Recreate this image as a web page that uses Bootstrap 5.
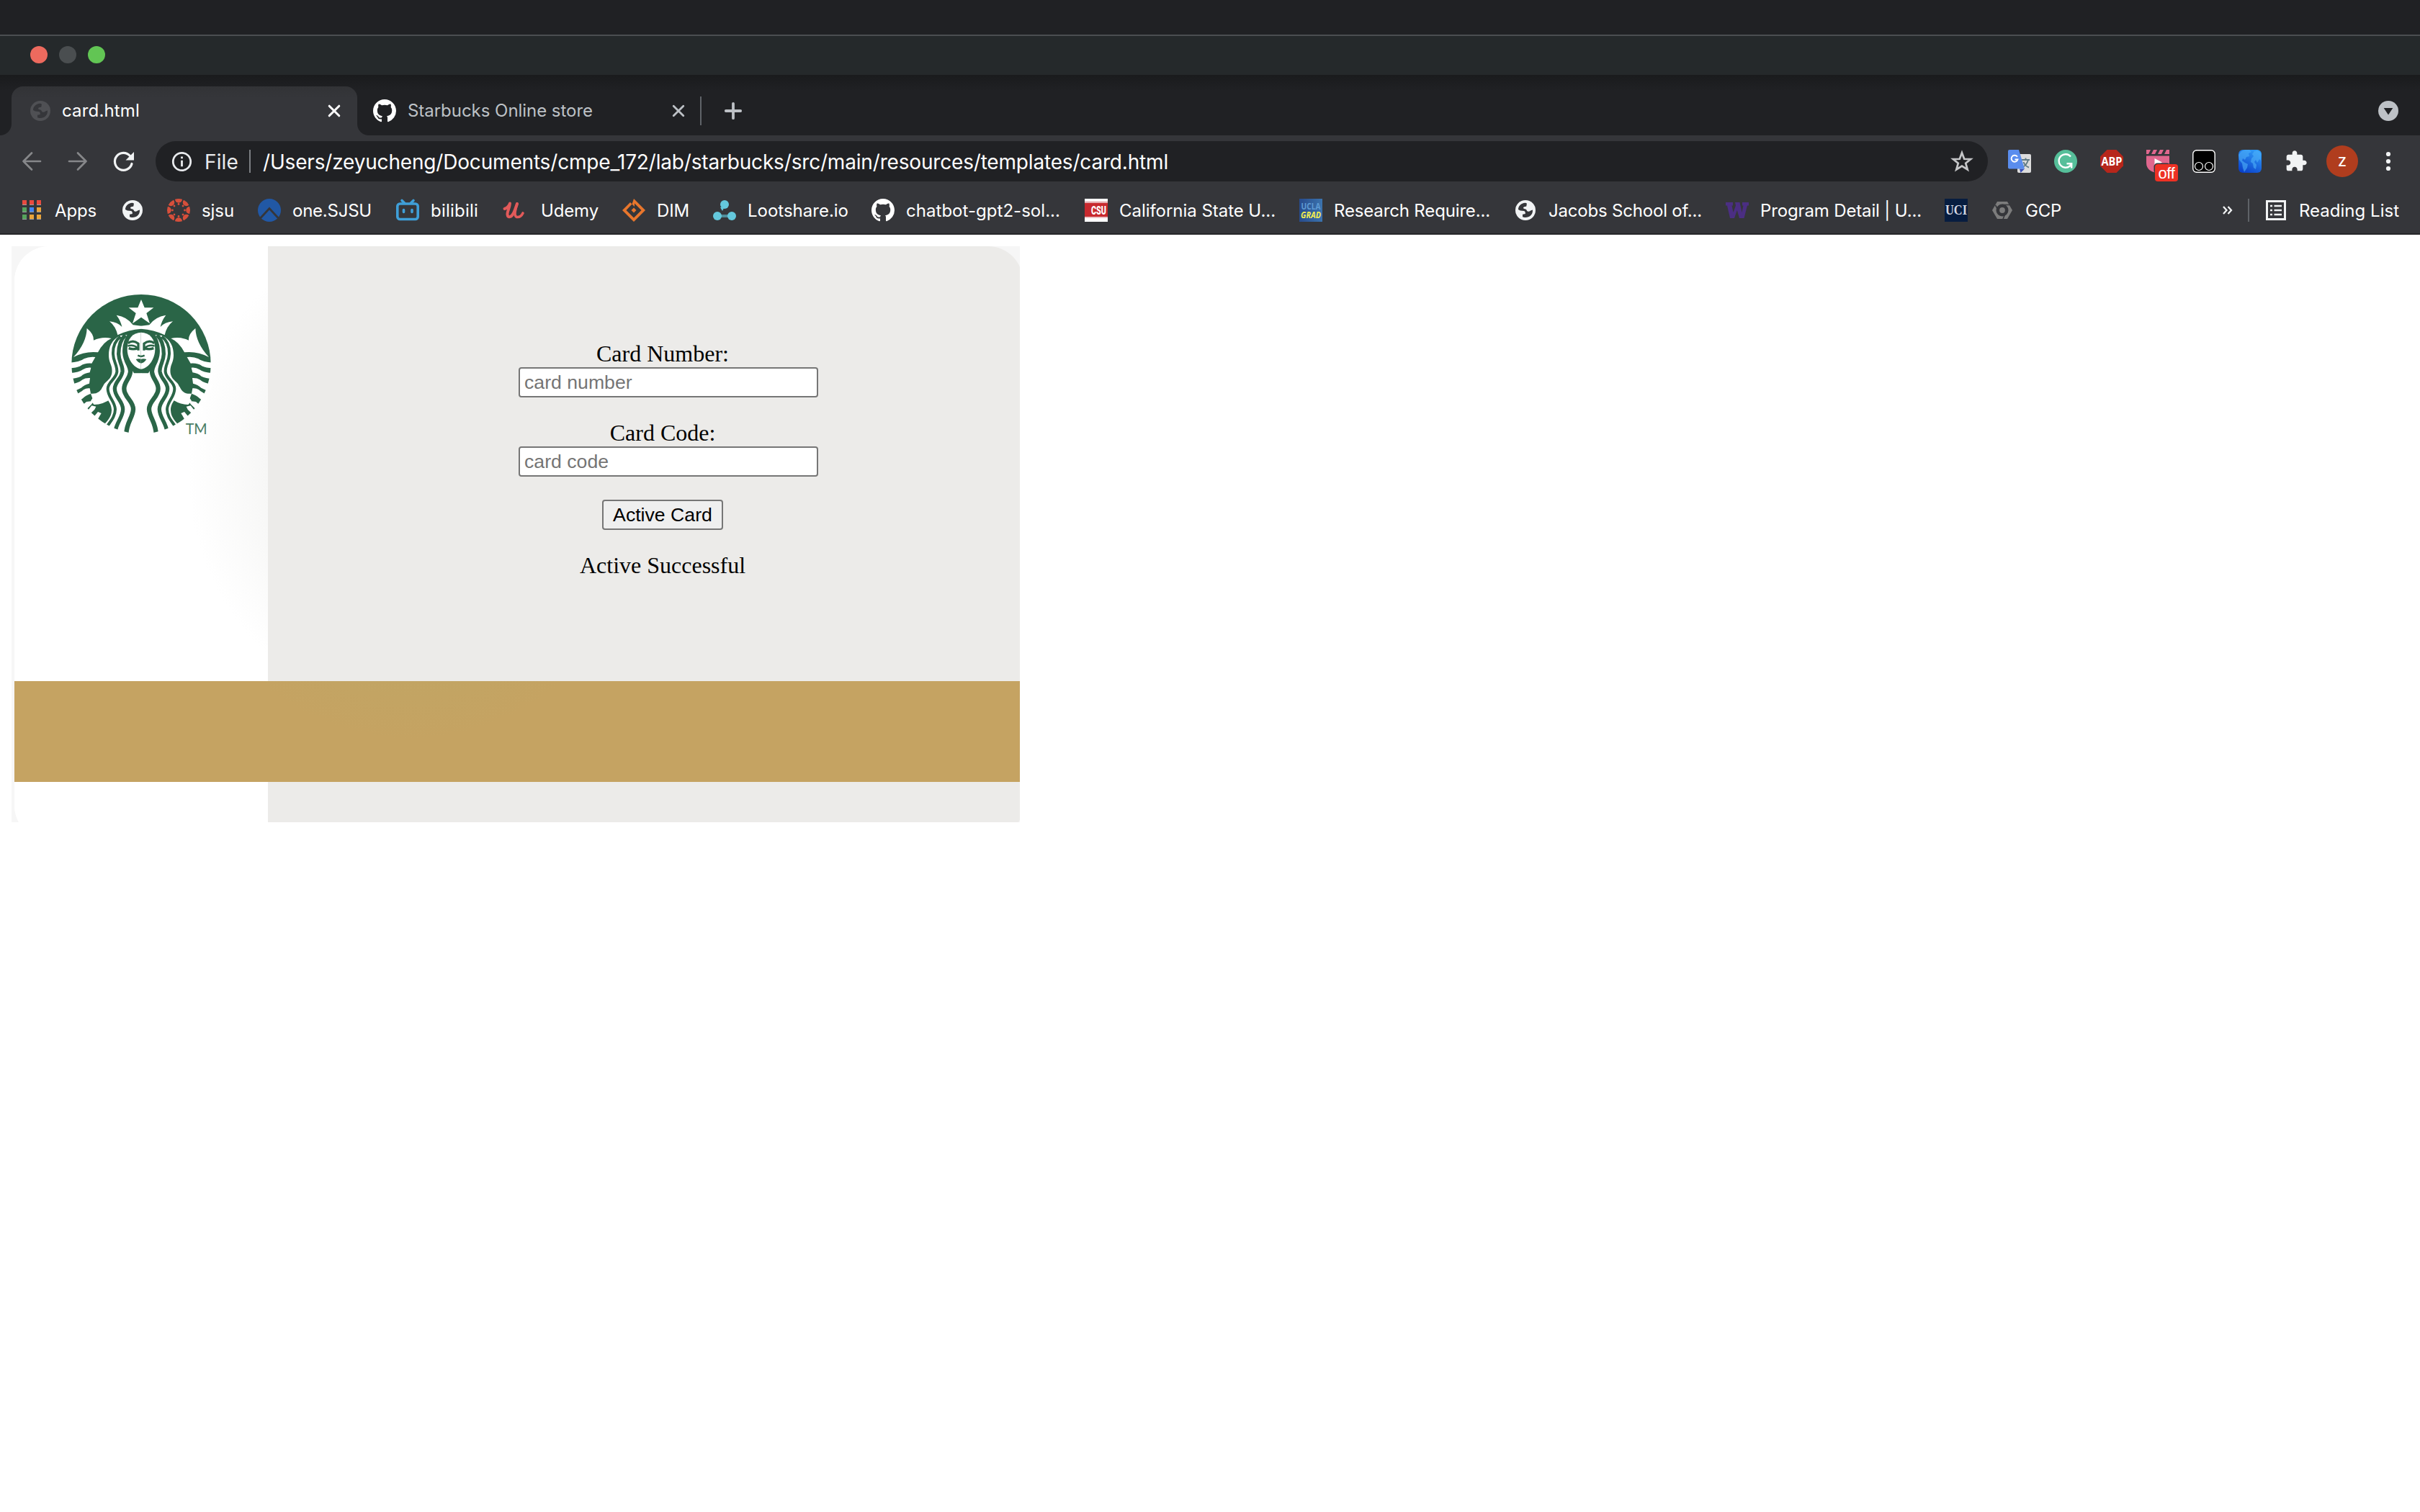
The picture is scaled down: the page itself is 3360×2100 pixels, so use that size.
<!DOCTYPE html>
<html lang="en">
<head>
<meta charset="utf-8">
<title>card.html</title>
<link href="https://cdn.jsdelivr.net/npm/bootstrap@5.3.0/dist/css/bootstrap.min.css" rel="stylesheet">
<style>
body{background:#fff;width:3360px;height:2100px;overflow:hidden;font-family:Inter,Roboto,sans-serif;color:#fff}
svg{display:block;flex:none;overflow:visible}
.menubar{height:50px;background:#202124;border-bottom:2px solid #4b4e51}
.titlebar{height:54px;background:#25292b;padding:0 0 2px 42px;gap:16px}
.light{width:24px;height:24px}
.tabstrip{height:84px;padding:16px 30px 0 16px;background:linear-gradient(#1a1b1d,#202124 22px)}
.tab{height:68px;font-size:24px;position:relative}
.tab-on{width:480px;padding:0 24px 0 26px;border-radius:16px 16px 0 0;background:linear-gradient(#323336,#35363a 16px)}
.tab-on::before,.tab-on::after{content:"";position:absolute;bottom:0;width:16px;height:16px}
.tab-on::before{left:-16px;background:radial-gradient(circle at 0 0,#202124 15.5px,#35363a 16.5px)}
.tab-on::after{right:-16px;background:radial-gradient(circle at 100% 0,#202124 15.5px,#35363a 16.5px)}
.tab-off{width:478px;padding:0 24px 0 22px;color:#bdc1c6}
.vline{width:2px;background:#5f6368}
.toolbar{height:72px;background:#35363a;padding:0 40px 0 28px}
.omnibox{width:2544px;height:56px;background:#202124;padding:0 20px 0 22px;font-size:28px;margin-left:28px}
.lbl{white-space:pre;display:inline-block;line-height:1}
.omnibox .lbl,.bookbar .lbl{padding-top:2px}
.bookbar{height:66px;background:#35363a;border-bottom:2px solid #262729;font-size:24px;padding:0 29px 0 28px}
.bm{flex:none;gap:16px}
.page{padding:16px}
.giftcard{width:1400px;height:800px;background:#f6f6f6;position:relative;overflow:hidden}
.face-side{width:1400px;height:825px;margin-left:4px;border-radius:48px;overflow:hidden;background:#ecebe9}
.brand{width:352px;height:825px;background:radial-gradient(ellipse 310px 335px at 550px 310px,#f0f0ef 40%,#f7f7f6 64%,#fff 100%),#fff;padding:48px 0 0 60px}
.band{position:absolute;left:4px;top:603.5px;width:1396px;height:140.5px;background:radial-gradient(ellipse 340px 370px at 550px -290px,#c1a564 70%,#c5a362 100%)}
.cardform{width:400px;margin-left:348px;padding-top:130px;font-family:"Liberation Serif",serif;font-size:32px;color:#000}
.cardform label,.cardform p{line-height:38px;height:38px;margin:0}
.cardform input,.cardform button{font:26.67px/30px "Liberation Sans",Arial,sans-serif;height:42px;border:2px solid #767676;border-radius:4px;display:block;flex:none}
.cardform input{width:416px;padding:0 6px;background:#fff;margin-bottom:30px}
.cardform input::placeholder{color:#757575;opacity:1}
.cardform button{width:168px;background:#efefef;color:#000;padding:0;margin:2px 0 30px}
.offtag{position:absolute;left:12px;top:20px;width:32px;height:24px;background:#ee3124;border-radius:4px;font:22px/26px "Liberation Sans",sans-serif;text-align:center;letter-spacing:-.3px}
</style>
<script src="https://cdn.jsdelivr.net/npm/bootstrap@5.3.0/dist/js/bootstrap.bundle.min.js"></script>
</head>
<body>
<svg width="0" height="0" class="position-absolute">
  <defs>
    <symbol id="globe" viewBox="0 0 28 28"><circle cx="14" cy="14" r="14" fill="currentColor"/><path fill="#35363a" d="M4 13C4 8 8 4 13.500 3.700 16 4 16.500 5 15.500 6.500L15.500 8C15 9.500 11.500 8.500 11 10.500 11 12 13 12 14 12.500 16 13 15.500 15 17 15.500 19 16 20.500 15.500 21 14.500L24 13.500C24.500 20 19.500 24 14 24 12.500 24 11 23.700 10 23.200L10 20C10.500 19 13.500 20 13.800 18.500 14 17 13.500 15.500 12 15L7 14.500Z"/></symbol>
    <symbol id="octo" viewBox="0 0 16 16"><path fill="#fff" d="M8 0C3.580 0 0 3.580 0 8c0 3.540 2.290 6.530 5.470 7.590.4.070.55-.17.55-.38 0-.19-.01-.82-.01-1.490-2.010.37-2.530-.49-2.690-.94-.09-.23-.48-.94-.82-1.130-.28-.15-.68-.52-.01-.53.63-.01 1.080.58 1.230.82.72 1.210 1.870.87 2.330.66.07-.52.28-.87.51-1.070-1.780-.2-3.640-.89-3.640-3.950 0-.87.31-1.590.82-2.150-.08-.2-.36-1.020.08-2.120 0 0 .67-.21 2.200.82.64-.18 1.320-.27 2-.27s1.360.09 2 .27c1.530-1.040 2.200-.82 2.200-.82.44 1.100.16 1.920.08 2.120.51.56.82 1.270.82 2.150 0 3.070-1.870 3.750-3.650 3.950.29.25.54.73.54 1.480 0 1.070-.01 1.930-.01 2.200 0 .21.15.46.55.38A8.010 8.010 0 0 0 16 8c0-4.420-3.580-8-8-8z"/></symbol>
  </defs>
</svg>

<header>
  <div class="menubar"></div>
  <div class="titlebar d-flex align-items-center">
    <span class="light rounded-circle" style="background:#ed6a5e"></span>
    <span class="light rounded-circle" style="background:#4a4e50"></span>
    <span class="light rounded-circle" style="background:#62c554"></span>
  </div>

  <nav class="tabstrip d-flex">
    <div class="tab tab-on d-flex align-items-center">
      <svg width="28" height="28" style="color:#4f5054"><use href="#globe"/></svg>
      <span class="lbl ms-3" data-w="108">card.html</span>
      <svg class="ms-auto" width="16" height="16" viewBox="0 0 16 16"><path d="M1.200 1.200 14.800 14.800M14.800 1.200 1.200 14.800" stroke="#fff" stroke-width="3" stroke-linecap="round"/></svg>
    </div>
    <div class="tab tab-off d-flex align-items-center">
      <svg width="32" height="32"><use href="#octo"/></svg>
      <span class="lbl ms-3" data-w="257">Starbucks Online store</span>
      <svg class="ms-auto" width="16" height="16" viewBox="0 0 16 16"><path d="M1.200 1.200 14.800 14.800M14.800 1.200 1.200 14.800" stroke="#bdc1c6" stroke-width="2.800" stroke-linecap="round"/></svg>
    </div>
    <div class="d-flex align-items-center tab">
      <span class="vline" style="height:40px;margin-left:-2px"></span>
      <svg width="24" height="24" viewBox="0 0 24 24" style="margin-left:32px"><path d="M12 1.800V22.200M1.800 12H22.200" stroke="#bdc1c6" stroke-width="3.800" stroke-linecap="round"/></svg>
    </div>
    <div class="d-flex align-items-center tab ms-auto">
      <svg width="28" height="28" viewBox="0 0 28 28"><circle cx="14" cy="14" r="14" fill="#bdc1c6"/><path d="M7.700 10H20.300L14 19.500Z" fill="#202124"/></svg>
    </div>
  </nav>

  <div class="toolbar d-flex align-items-center">
    <svg width="32" height="32" viewBox="0 0 32 32" fill="none" stroke="#86878a" stroke-width="2.700" stroke-linecap="round" stroke-linejoin="round"><path d="M28 16H4.500M16 4.500 4.500 16 16 27.500"/></svg>
    <svg class="ms-4" width="40" height="32" viewBox="-8 0 40 32" fill="none" stroke="#86878a" stroke-width="2.700" stroke-linecap="round" stroke-linejoin="round"><path d="M4 16H27.500M16 4.500 27.500 16 16 27.500"/></svg>
    <svg class="ms-4" width="40" height="32" viewBox="-8 0 40 32"><path d="M27 19.500A12 12 0 1 1 24.500 8.500" fill="none" stroke="#f1f3f4" stroke-width="3.200" stroke-linecap="round"/><path d="M30 3V14.500H18.500Z" fill="#f1f3f4"/></svg>
    <div class="omnibox rounded-pill d-flex align-items-center">
      <svg width="28" height="28" viewBox="0 0 28 28"><circle cx="14.500" cy="14.500" r="12.200" fill="none" stroke="#e8eaed" stroke-width="2.800"/><path d="M14.500 12.800V21.300M14.500 7.500V10.300" stroke="#e8eaed" stroke-width="2.800"/></svg>
      <span class="lbl" data-w="47" style="color:#e8eaed;margin-left:18px">File</span>
      <span class="vline" style="height:32px;margin-left:15px;background:#7c7f83"></span>
      <span class="lbl" data-w="1257" style="margin-left:17px">/Users/zeyucheng/Documents/cmpe_172/lab/starbucks/src/main/resources/templates/card.html</span>
      <svg class="ms-auto" width="32" height="32" viewBox="0 0 32 32"><path d="M16 4.200 19.200 12.800 28.200 13.100 21.200 18.700 23.700 27.500 16 22.500 8.300 27.500 10.800 18.700 3.800 13.100 12.800 12.800Z" fill="none" stroke="#c5c6c8" stroke-width="2.700"/></svg>
    </div>
    <div class="d-flex align-items-center" style="gap:32px;margin-left:28px">
      <svg width="32" height="32" viewBox="0 0 32 32"><rect x="13" y="6" width="19" height="26" rx="2" fill="#dcdcdc"/><path d="M16 26.500H23L17.500 32Z" fill="#3a4fb5"/><path d="M19 14H30M24.500 11.500V14M28 14C26.500 19 23 23 20 24M21.500 17C23 21 26 23.500 29 24.500" stroke="#607a84" stroke-width="1.900" fill="none"/><path d="M2 0H15L23 26.500H2A2 2 0 0 1 0 24.500V2A2 2 0 0 1 2 0Z" fill="#5a8dee"/><path d="M13 9.800A4.500 4.500 0 1 0 13.500 13.500H9.500" fill="none" stroke="#fff" stroke-width="1.900"/></svg>
      <svg width="32" height="32" viewBox="0 0 32 32"><circle cx="16" cy="16" r="16" fill="#56bf9a"/><path d="M23 9.500A9.300 9.300 0 1 0 22 22.500L24 19.500M17.500 19.200H24.200V25.500" fill="none" stroke="#fff" stroke-width="2.400"/></svg>
      <svg width="32" height="32" viewBox="0 0 32 32"><path d="M9.500 0H22.500L32 9.500V22.500L22.500 32H9.500L0 22.500V9.500Z" fill="#b7261b"/><text x="16" y="21.500" text-anchor="middle" textLength="29" lengthAdjust="spacingAndGlyphs" font-family="Open Sans,sans-serif" font-weight="700" font-size="15.500" fill="#fff">ABP</text></svg>
      <div class="position-relative">
        <svg width="32" height="32" viewBox="0 0 32 32"><path d="M0 0H6L3 6H0ZM10 0H15L12 6H7ZM19 0H24L21 6H16ZM28 0H32V6H25Z" fill="#e0678e"/><path d="M0 8.500H32V18C32 27 26 31 16 32 6 31 0 27 0 18Z" fill="#e0678e"/><path d="M11.500 12 22 17.500 11.500 24Z" fill="#fff"/><rect x="10.500" y="18.500" width="23" height="15" rx="5" fill="#35363a"/></svg>
        <span class="offtag">off</span>
      </div>
      <svg width="32" height="32" viewBox="0 0 32 32"><rect x=".8" y=".8" width="30.400" height="30.400" rx="5" fill="#000" stroke="#fff" stroke-width="1.400"/><g fill="none" stroke="#fff" stroke-width="1.200"><circle cx="9" cy="23" r="5.500"/><circle cx="23" cy="23" r="5.500"/></g></svg>
      <svg width="32" height="32" viewBox="0 0 32 32"><defs><linearGradient id="sea" x1=".7" y1="0" x2=".2" y2="1"><stop offset="0" stop-color="#2f9bf8"/><stop offset="1" stop-color="#0a3fc8"/></linearGradient></defs><rect width="32" height="32" rx="6" fill="url(#sea)"/><path d="M0 7 4 2 9 0H15L18 3 14 5 15 9 11 10 9 14 6 12 5 15 9 18 13 20 12 25 8 31 6 25 5 19 1 14ZM19 6 22 2 27 1 31 5V15L29 13 26 18 24 14 22 17 25 21 24 27 21 25 20 19 17 17 18 12 21 9Z" fill="#4fb0f8" opacity=".6"/></svg>
      <svg width="32" height="32" viewBox="0 0 24 24"><path fill="#f1f3f4" d="M20.500 11H19V7c0-1.100-.9-2-2-2h-4V3.500C13 2.120 11.880 1 10.500 1S8 2.120 8 3.500V5H4c-1.100 0-1.990.9-1.990 2v3.800H3.500c1.490 0 2.700 1.210 2.700 2.700s-1.210 2.700-2.700 2.700H2V20c0 1.100.9 2 2 2h3.800v-1.500c0-1.490 1.210-2.700 2.700-2.700 1.490 0 2.700 1.210 2.700 2.700V22H17c1.100 0 2-.9 2-2v-4h1.500c1.380 0 2.500-1.120 2.500-2.500S21.880 11 20.500 11z"/></svg>
    </div>
    <svg class="ms-auto" width="44" height="44" viewBox="0 0 44 44"><circle cx="22" cy="22" r="22" fill="#b03d1e"/><text x="22" y="28.500" text-anchor="middle" font-family="Roboto,sans-serif" font-size="18" font-weight="500" fill="#fff">Z</text></svg>
    <svg width="8" height="28" viewBox="0 0 8 28" style="margin-left:38px"><g fill="#f1f3f4"><circle cx="4" cy="4" r="3.100"/><circle cx="4" cy="14" r="3.100"/><circle cx="4" cy="24" r="3.100"/></g></svg>
  </div>

  <div class="bookbar d-flex align-items-center">
    <div class="bm d-flex align-items-center" style="width:140px">
      <svg width="32" height="32" viewBox="0 0 32 32"><g fill="#9b9c9e"><path d="M3 3h6v6H3zM13 3h6v6h-6zM23 3h6v6h-6zM3 13h6v6H3zM13 13h6v6h-6zM23 13h6v6h-6zM3 23h6v6H3zM13 23h6v6h-6zM23 23h6v6h-6z"/></g><path d="M3 2h6v6H3zM13 2h6v6h-6zM23 2h6v6h-6z" fill="#e94a3f"/><path d="M3 12h6v6H3zM3 22h6v6H3z" fill="#55a35c"/><path d="M13 12h6v6h-6z" fill="#4285f4"/><path d="M23 12h6v6h-6zM13 22h6v6h-6zM23 22h6v6h-6z" fill="#eaa43a"/></svg>
      <span class="lbl" data-w="58">Apps</span></div>
    <div class="bm d-flex align-items-center" style="width:64px"><svg width="28" height="28" style="margin-left:2px;color:#f1f3f4"><use href="#globe"/></svg></div>
    <div class="bm d-flex align-items-center" style="width:126px">
      <svg width="32" height="32" viewBox="-16 -16 32 32" fill="#d64f3b"><g id="cv"><path d="M-5-15.200A16 16 0 0 1 5-15.200 5 5 0 0 1-5-15.200Z"/><circle cy="-8.500" r="1.400"/></g><use href="#cv" transform="rotate(45)"/><use href="#cv" transform="rotate(90)"/><use href="#cv" transform="rotate(135)"/><use href="#cv" transform="rotate(180)"/><use href="#cv" transform="rotate(225)"/><use href="#cv" transform="rotate(270)"/><use href="#cv" transform="rotate(315)"/></svg>
      <span class="lbl" data-w="45">sjsu</span></div>
    <div class="bm d-flex align-items-center" style="width:192px">
      <svg width="32" height="32" viewBox="0 0 32 32"><circle cx="16" cy="16" r="16" fill="#2158a5"/><path d="M3.500 27 16 13.500 28.500 27" fill="none" stroke="#35363a" stroke-width="2.800"/></svg>
      <span class="lbl" data-w="110">one.SJSU</span></div>
    <div class="bm d-flex align-items-center" style="width:148px">
      <svg width="32" height="32" viewBox="0 0 32 32" fill="none" stroke="#3f9fd8" stroke-width="3.600" stroke-linecap="round"><rect x="1.800" y="7" width="28.400" height="21.500" rx="3.500"/><path d="M8 2.500 11.500 6M24 2.500 20.500 6M10.500 15.500V18.500M22 15.500V18.500"/></svg>
      <span class="lbl" data-w="66">bilibili</span></div>
    <div class="bm d-flex align-items-center" style="width:166px">
      <svg width="37" height="32" viewBox="0 0 37 32" fill="none" stroke="#e25a5a" stroke-linecap="round" stroke-linejoin="round"><path d="M2.500 14C6 13 9.500 9 10 6.500 9.500 13 6 18 6.500 22 7 27 12 26 15 20 17 16 19 10 20 7" stroke-width="4"/><path d="M20 7C17.500 14 15 24 19.500 25.500 24 26 27 22 28 20" stroke-width="3.600"/></svg>
      <span class="lbl" data-w="80">Udemy</span></div>
    <div class="bm d-flex align-items-center" style="width:126px">
      <svg width="32" height="32" viewBox="0 0 32 32"><path d="M16 0 32 16 16 32 0 16 11 5 13.500 7.500 5.500 16 16 26.500 26.500 16 17 6.500V11L13.500 7.500Z" fill="#e8762c"/><path d="M16 2.500 26.500 13" stroke="#e8762c" stroke-width="2"/><path d="M16 12.500 19.500 16 16 19.500 12.500 16Z" fill="#e8762c"/></svg>
      <span class="lbl" data-w="45">DIM</span></div>
    <div class="bm d-flex align-items-center" style="width:220px">
      <svg width="32" height="32" viewBox="0 0 32 32" fill="#64c8dc"><circle cx="16" cy="8" r="6"/><circle cx="6" cy="24" r="6"/><circle cx="26" cy="24" r="6"/><path d="M10 12 16 11 13 17Z"/><path d="M11 22H21V26H11Z" opacity=".6"/></svg>
      <span class="lbl" data-w="140">Lootshare.io</span></div>
    <div class="bm d-flex align-items-center" style="width:296px"><svg width="32" height="32"><use href="#octo"/></svg><span class="lbl" data-w="214">chatbot-gpt2-sol...</span></div>
    <div class="bm d-flex align-items-center" style="width:298px">
      <svg width="32" height="32" viewBox="0 0 32 32"><path d="M0 0H32V32H0Z" fill="#fff"/><path d="M0 4H32V5.500H0ZM0 25.500H32V26.500H0Z" fill="#d98a8d"/><path d="M0 6H32V25H0Z" fill="#c8292e"/><text x="9" y="21.500" textLength="21" lengthAdjust="spacingAndGlyphs" font-family="Roboto,sans-serif" font-weight="900" font-size="16" fill="#fff">CSU</text></svg>
      <span class="lbl" data-w="217">California State U...</span></div>
    <div class="bm d-flex align-items-center" style="width:298px">
      <svg width="32" height="32" viewBox="0 0 32 32"><defs><linearGradient id="uc"><stop stop-color="#274b8c"/><stop offset="1" stop-color="#3b73ae"/></linearGradient></defs><path d="M0 0H32V32H0Z" fill="url(#uc)"/><g font-family="Open Sans,sans-serif" font-size="11.500" font-weight="700"><text x="2.500" y="14.500" textLength="27" lengthAdjust="spacingAndGlyphs" fill="#5f9bd3">UCLA</text><text x="2" y="26.500" textLength="28" lengthAdjust="spacingAndGlyphs" font-style="italic" fill="#f3ee4e">GRAD</text></g></svg>
      <span class="lbl" data-w="217">Research Require...</span></div>
    <div class="bm d-flex align-items-center" style="width:294px;color:#f1f3f4"><svg width="32" height="28" viewBox="0 0 32 28"><use href="#globe" x="2" width="28" height="28"/></svg><span class="lbl text-white" data-w="213">Jacobs School of...</span></div>
    <div class="bm d-flex align-items-center" style="width:304px">
      <svg width="32" height="32" viewBox="0 0 32 32"><path d="M0 5H10V9.500H8.500L10.500 19 14 9.500 13 5H19.500L22.500 19 24.500 9.500H23V5H32V9.500H30L25.500 27H19L15.800 16 12 27H6L2 9.500H0Z" fill="#4b2e83"/></svg>
      <span class="lbl" data-w="224">Program Detail | U...</span></div>
    <div class="bm d-flex align-items-center" style="width:64px">
      <svg width="32" height="32" viewBox="0 0 32 32"><path d="M0 0H32V32H0Z" fill="#071d40"/><text x="1" y="21.500" textLength="30" lengthAdjust="spacingAndGlyphs" font-family="Liberation Serif,serif" font-size="18.500" font-weight="700" fill="#d4d8e2">UCI</text></svg></div>
    <div class="bm d-flex align-items-center">
      <svg width="32" height="32" viewBox="0 0 32 32"><path d="M9 4H23L30 16 23 28H9L2 16Z" fill="#7c7c7c"/><circle cx="16" cy="16" r="6.200" fill="#7c7c7c" stroke="#35363a" stroke-width="4.600"/><path d="M6.500 9 11 17M15.500 8.500H26M21 18 17 28.500" stroke="#35363a" stroke-width="1.600"/></svg>
      <span class="lbl" data-w="50">GCP</span></div>
    <svg class="ms-auto" width="14" height="12" viewBox="0 0 14 12" style="margin-right:21px" fill="none" stroke="#f1f3f4" stroke-width="2.300"><path d="M1 1 5.500 6 1 11M7.500 1 12 6 7.500 11"/></svg>
    <span class="vline" style="height:32px"></span>
    <svg width="28" height="28" viewBox="0 0 28 28" style="margin:0 18px 0 23px"><rect x="1.500" y="1.500" width="25" height="25" fill="none" stroke="#f1f3f4" stroke-width="3"/><path d="M6 8H9M6 14H9M6 20H9M11.500 8H22M11.500 14H22M11.500 20H22" stroke="#f1f3f4" stroke-width="2.600"/></svg>
    <span class="lbl" data-w="139">Reading List</span>
  </div>
</header>

<main class="page">
  <section class="giftcard">
    <div class="face-side d-flex">
      <div class="brand flex-shrink-0">
        <svg width="230" height="230" viewBox="0 0 690 690" role="img" aria-label="Siren logo">
          <defs><clipPath id="disc"><circle cx="348" cy="347" r="290"/></clipPath>
          <g id="half">
            <g fill="#fff">
              <path d="M348 78 334 112H296L326 135 312 178 348 152Z"/>
              <path d="M216 169Q250 173 268 192 262 165 245 143 290 150 314 184L349 188V200Q295 203 250 226 242 190 216 169Z"/>
              <path d="M122 198Q152 222 150 248 185 232 224 240 190 255 168 298 115 292 66 318 120 260 122 198Z"/>
              <path d="M50 341Q90 340 110 325 130 315 157 318L142 344Q112 342 95 355 78 364 50 364Z"/>
              <path d="M50 385Q90 382 105 370 120 360 139 362L134 382Q112 385 97 398 80 407 50 408Z"/>
              <path d="M50 432Q85 428 104 412 115 404 135 405L132 428Q112 432 98 446 82 456 60 460Z"/>
              <path d="M70 478Q95 465 108 454 120 446 134 448L138 470Q115 478 105 490L80 508Z"/>
              <path d="M138 470Q175 474 188 440L225 490Q190 516 152 516L138 500 145 490Z"/>
              <path d="M88 532 120 504 150 500 142 514 112 544ZM110 560 142 520 160 524 154 536 128 562ZM140 580 168 546 182 552 176 562 160 590Z"/>
              <path d="M262 228C225 245 213 275 213 310 213 345 230 350 226 385 220 420 188 420 188 450 188 485 226 500 225 540 224 570 205 585 185 610L240 660H349V385H318L300 300V225Z"/>
            </g>
            <g fill="none" stroke="#2a6547" clip-path="url(#disc)">
              <path d="M305 220C285 245 278 270 280 300 282 340 306 355 303 380 300 410 277 420 277 450 277 485 315 500 315 535 314 570 286 590 286 640" stroke-width="19"/>
              <path d="M282 226C262 245 254 275 254 305 255 340 272 350 270 378 266 410 238 420 238 450 238 485 272 500 272 535 272 570 244 590 240 630" stroke-width="16"/>
              <path d="M262 232C238 250 230 275 231 305 232 340 249 350 247 380 242 412 209 420 209 450 209 485 238 500 240 535 240 570 215 590 201 615" stroke-width="12"/>
            </g>
            <path d="M349 204C300 204 278 230 284 290 288 335 305 365 318 384H349V204Z" fill="#2a6547"/>
            <path d="M349 215C313 216 290 240 290 285 290 325 318 366 349 368Z" fill="#fff"/>
            <g fill="none" stroke="#2a6547">
              <path d="M293 260Q315 244 336 262V290" stroke-width="10"/>
              <path d="M292 272Q315 264 334 280" stroke-width="7"/>
              <path d="M296 281Q315 288 334 281" stroke-width="10"/>
              <path d="M334 311Q342 315 349 315" stroke-width="7"/>
            </g>
            <path d="M326 327Q340 322 349 327V344Q335 342 326 327Z" fill="#2a6547"/>
            <path d="M318 183Q334 175 349 160V179Z" fill="#2a6547"/>
          </g></defs>
          <circle cx="348" cy="347" r="290" fill="#2a6547"/>
          <path d="M200 600 286 520H410L496 600 440 660H256Z" fill="#fff"/>
          <use href="#half"/><use href="#half" transform="matrix(-1 0 0 1 696 0)"/>
          <text x="533" y="640" font-family="Lato,sans-serif" font-size="62" textLength="90" lengthAdjust="spacingAndGlyphs" fill="#4a7d63">TM</text>
        </svg>
      </div>
      <form class="cardform d-flex flex-column align-items-center" onsubmit="return false">
        <label for="num">Card Number:</label>
        <input class="align-self-start" id="num" placeholder="card number">
        <label for="code">Card Code:</label>
        <input class="align-self-start" id="code" placeholder="card code">
        <button>Active Card</button>
        <p>Active Successful</p>
      </form>
    </div>
    <div class="band"></div>
  </section>
</main>

<script>
document.querySelectorAll('.lbl[data-w]').forEach(function (el) {
  var ls = (el.dataset.w - el.getBoundingClientRect().width) / el.textContent.length;
  el.style.letterSpacing = ls.toFixed(3) + 'px';
});
</script>
</body>
</html>
